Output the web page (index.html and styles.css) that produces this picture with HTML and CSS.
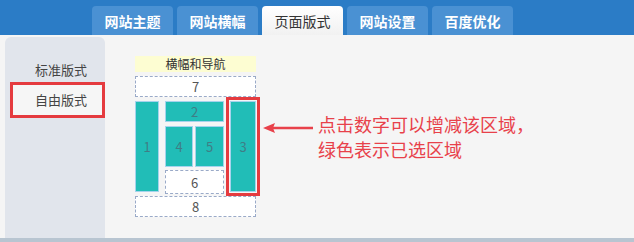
FILE: index.html
```html
<!DOCTYPE html>
<html lang="zh-CN">
<head>
    <meta charset="UTF-8">
    <title>页面版式</title>
    <link rel="stylesheet" href="styles.css">
</head>
<body>
    <div class="topbar">
        <div class="tab">网站主题</div>
        <div class="tab">网站横幅</div>
        <div class="tab active">页面版式</div>
        <div class="tab">网站设置</div>
        <div class="tab">百度优化</div>
    </div>

    <div class="main">
        <div class="sidebar">
            <div class="side-item">标准版式</div>
            <div class="side-item current">自由版式</div>
        </div>

        <div class="content">
            <div class="layout">
                <div class="banner">横幅和导航</div>
                <div class="area dashed wide">7</div>
                <div class="area solid col-left">1</div>
                <div class="middle">
                    <div class="area solid">2</div>
                    <div class="pair">
                        <div class="area solid">4</div>
                        <div class="area solid">5</div>
                    </div>
                    <div class="area dashed six">6</div>
                </div>
                <div class="area solid col-right picked">3</div>
                <div class="area dashed wide">8</div>
            </div>

            <div class="note">
                <svg class="arrow" width="50" height="12" viewBox="0 0 50 12">
                    <path d="M10 6 H50" stroke="#e8414a" stroke-width="2.5"/>
                    <path d="M0 6 L12 1 L10 6 L12 11 Z" fill="#e8414a"/>
                </svg>
                <p>点击数字可以增减该区域，<br>绿色表示已选区域</p>
            </div>
        </div>
    </div>
    <div class="bottom-line"></div>
</body>
</html>
```

FILE: styles.css
```css
body {
    margin: 0;
    width: 634px;
    height: 242px;
    overflow: hidden;
    background-color: #f5f5f5;
    font-family: "Noto Sans CJK SC", "Noto Sans", sans-serif;
    color: #333;
}

.topbar {
    height: 35px;
    background-color: #2b7cc6;
    display: flex;
    align-items: flex-end;
    padding-left: 92px;
    gap: 4px;
    box-sizing: border-box;
}

.tab {
    width: 81px;
    height: 29px;
    line-height: 30px;
    text-align: center;
    background-color: #4a91d3;
    color: #fff;
    font-size: 14px;
    font-weight: bold;
    border-radius: 4px 4px 0 0;
}

.tab.active {
    background: linear-gradient(#ffffff, #f1f1f1);
    color: #333;
    font-weight: normal;
}

.main {
    display: flex;
    height: 203px;
}

.sidebar {
    width: 100px;
    margin: 2px 0 0 5px;
    background-color: #e1e5ec;
    border-radius: 6px 6px 0 0;
    padding-top: 22px;
    box-sizing: border-box;
}

.side-item {
    height: 22px;
    line-height: 22px;
    font-size: 13px;
    padding-left: 25px;
    margin-left: 5px;
    color: #444;
}

.side-item.current {
    margin-top: 1px;
    height: 36px;
    line-height: 30px;
    padding-left: 22px;
    background-color: #f6f6f6;
    border: 3px solid #e53b3f;
    box-sizing: border-box;
}

.content {
    display: flex;
    align-items: flex-start;
    padding: 21px 0 0 30px;
}

.layout {
    display: grid;
    grid-template-columns: 24px 59px 26px;
    grid-template-rows: 16px 21px 91px 21px;
    column-gap: 6px;
    row-gap: 4px;
    width: 121px;
}

.banner {
    grid-column: 1 / 4;
    background-color: #fdfdd2;
    font-size: 12px;
    line-height: 16px;
    text-align: center;
}

.wide {
    grid-column: 1 / 4;
}

.area {
    box-sizing: border-box;
    display: flex;
    align-items: center;
    justify-content: center;
    font-size: 13px;
}

.dashed {
    background-color: #fff;
    border: 1px dashed #9aaac8;
    color: #555;
}

.solid {
    background-color: #21bdb7;
    border: 1px solid #a6d3ec;
    color: #3f7d86;
}

.middle {
    display: grid;
    grid-template-rows: 21px 41px 23px;
    row-gap: 4px;
}

.middle .six {
    margin-top: -1px;
}

.pair {
    display: grid;
    grid-template-columns: 28px 29px;
    column-gap: 2px;
}

.picked {
    outline: 3px solid #e53b3f;
    outline-offset: 1px;
}

.note {
    display: flex;
    align-items: flex-start;
    margin: 56px 0 0 7px;
}

.arrow {
    margin-top: 10px;
}

.note p {
    margin: 0 0 0 5px;
    font-size: 18px;
    line-height: 25px;
    color: #e8414a;
}

.bottom-line {
    height: 4px;
    background-color: #b8c5d1;
}
```
